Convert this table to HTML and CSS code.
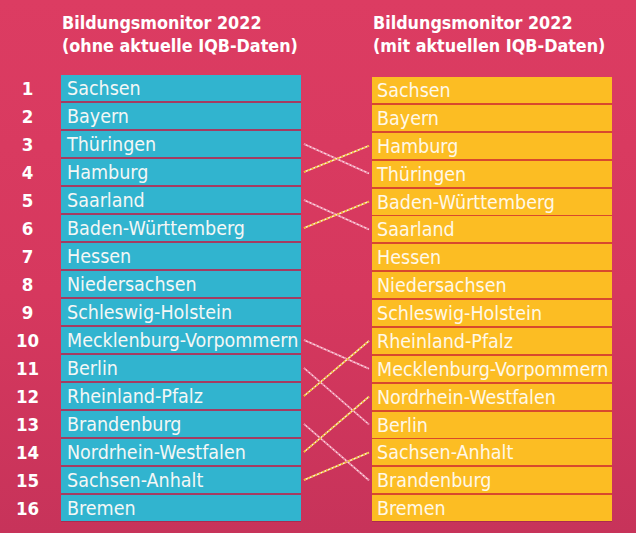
FILE: index.html
```html
<!DOCTYPE html>
<html lang="de">
<head>
<meta charset="utf-8">
<title>Bildungsmonitor 2022</title>
<link rel="stylesheet" href="styles.css">
</head>
<body>
<main class="board">
  <h2 class="title title-left">Bildungsmonitor 2022<br>(ohne aktuelle IQB-Daten)</h2>
  <h2 class="title title-right">Bildungsmonitor 2022<br>(mit aktuellen IQB-Daten)</h2>

  <ol class="ranks">
    <li>1</li><li>2</li><li>3</li><li>4</li><li>5</li><li>6</li><li>7</li><li>8</li>
    <li>9</li><li>10</li><li>11</li><li>12</li><li>13</li><li>14</li><li>15</li><li>16</li>
  </ol>

  <ul class="list list-blue">
    <li>Sachsen</li>
    <li>Bayern</li>
    <li>Thüringen</li>
    <li>Hamburg</li>
    <li>Saarland</li>
    <li>Baden-Württemberg</li>
    <li>Hessen</li>
    <li>Niedersachsen</li>
    <li>Schleswig-Holstein</li>
    <li>Mecklenburg-Vorpommern</li>
    <li>Berlin</li>
    <li>Rheinland-Pfalz</li>
    <li>Brandenburg</li>
    <li>Nordrhein-Westfalen</li>
    <li>Sachsen-Anhalt</li>
    <li>Bremen</li>
  </ul>

  <svg class="links" width="71" height="446" viewBox="0 0 71 446" aria-hidden="true">
    <g class="down">
      <line x1="3" y1="69" x2="68" y2="98.6"/>
      <line x1="3" y1="125" x2="68" y2="154.4"/>
      <line x1="3" y1="265" x2="68" y2="293.8"/>
      <line x1="3" y1="293" x2="68" y2="349.5"/>
      <line x1="3" y1="349" x2="68" y2="405.3"/>
    </g>
    <g class="up">
      <line x1="3" y1="97" x2="68" y2="70.8"/>
      <line x1="3" y1="153" x2="68" y2="126.5"/>
      <line x1="3" y1="321" x2="68" y2="265.9"/>
      <line x1="3" y1="377" x2="68" y2="321.6"/>
      <line x1="3" y1="405" x2="68" y2="377.4"/>
    </g>
    <g class="down dash">
      <line x1="3" y1="69" x2="68" y2="98.6"/>
      <line x1="3" y1="125" x2="68" y2="154.4"/>
      <line x1="3" y1="265" x2="68" y2="293.8"/>
      <line x1="3" y1="293" x2="68" y2="349.5"/>
      <line x1="3" y1="349" x2="68" y2="405.3"/>
    </g>
    <g class="up dash">
      <line x1="3" y1="97" x2="68" y2="70.8"/>
      <line x1="3" y1="153" x2="68" y2="126.5"/>
      <line x1="3" y1="321" x2="68" y2="265.9"/>
      <line x1="3" y1="377" x2="68" y2="321.6"/>
      <line x1="3" y1="405" x2="68" y2="377.4"/>
    </g>
  </svg>

  <ul class="list list-yellow">
    <li>Sachsen</li>
    <li>Bayern</li>
    <li>Hamburg</li>
    <li>Thüringen</li>
    <li>Baden-Württemberg</li>
    <li>Saarland</li>
    <li>Hessen</li>
    <li>Niedersachsen</li>
    <li>Schleswig-Holstein</li>
    <li>Rheinland-Pfalz</li>
    <li>Mecklenburg-Vorpommern</li>
    <li>Nordrhein-Westfalen</li>
    <li>Berlin</li>
    <li>Sachsen-Anhalt</li>
    <li>Brandenburg</li>
    <li>Bremen</li>
  </ul>
</main>
</body>
</html>
```

FILE: styles.css
```css
html, body {
  margin: 0;
  padding: 0;
}

body {
  width: 636px;
  height: 533px;
  overflow: hidden;
  background: linear-gradient(180deg, #dc3c62 0%, #d6385e 55%, #c7335a 100%);
  font-family: "DejaVu Sans Condensed", "DejaVu Sans", sans-serif;
  font-stretch: condensed;
  color: #fbf7f2;
}

.board {
  display: grid;
  grid-template-columns: 61px 240px 71px 240px;
  grid-template-rows: 46px auto;
  row-gap: 18px;
  padding-top: 11px;
}

.title {
  margin: 0;
  font-size: 17.8px;
  line-height: 23px;
  font-weight: bold;
  color: #ffffff;
  padding-left: 1px;
  white-space: nowrap;
}

.title-left { grid-column: 2; grid-row: 1; }
.title-right { grid-column: 4; grid-row: 1; }

.ranks {
  grid-column: 1;
  grid-row: 2;
  list-style: none;
  margin: 0;
  padding: 0 6px 0 0;
  display: flex;
  flex-direction: column;
  gap: 2px;
}

.ranks li {
  height: 26px;
  line-height: 28px;
  text-align: center;
  font-size: 18.5px;
  font-weight: bold;
  color: #ffffff;
}

.list {
  grid-row: 2;
  list-style: none;
  margin: 0;
  padding: 0;
  display: flex;
  flex-direction: column;
}

.list li {
  height: 26px;
  line-height: 27px;
  font-size: 19.5px;
  white-space: nowrap;
  overflow: hidden;
}

.list-blue {
  grid-column: 2;
  gap: 2px;
}

.list-blue li {
  background: #31b4cf;
  padding-left: 6px;
  box-shadow: 0 2px 0 #a43c62;
  color: #f4f7f6;
}

.list-blue li:last-child,
.list-yellow li:last-child {
  box-shadow: 0 1px 0 rgba(120, 30, 60, 0.35);
}

.list-yellow {
  grid-column: 4;
  gap: 1.875px;
  padding-top: 2px;
}

.list-yellow li {
  background: #fcbd23;
  padding-left: 5px;
  box-shadow: 0 2px 0 #d8492d;
  color: #fff8e8;
}

.links {
  grid-column: 3;
  grid-row: 2;
  display: block;
}

.links line {
  stroke-width: 1.6;
  stroke-linecap: butt;
}

.links .down line { stroke: #fbd5df; }
.links .up line { stroke: #fff3cf; }

.links .dash line {
  stroke-dasharray: 2.2 1.8;
  stroke-width: 1.7;
}

.links .down.dash line { stroke: #ec7c9e; }
.links .up.dash line { stroke: #f0b42c; }
```
